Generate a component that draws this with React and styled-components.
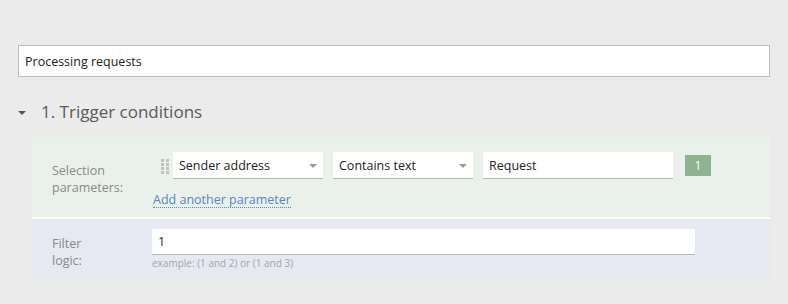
import React from 'react';
import styled, { createGlobalStyle } from 'styled-components';

const GlobalStyle = createGlobalStyle`
  body {
    margin: 0;
    background: #ebebeb;
    font-family: "Segoe UI", "Open Sans", "Noto Sans", sans-serif;
  }
`;

const Page = styled.div`
  padding: 45px 18px 0 18px;
  height: 304px;
  box-sizing: border-box;
`;

const TitleInput = styled.div`
  height: 32px;
  box-sizing: border-box;
  border: 1px solid #bdbdbd;
  background: #fff;
  display: flex;
  align-items: center;
  padding-left: 6px;
  font-size: 12.5px;
  color: #222;
`;

const Heading = styled.div`
  display: flex;
  align-items: center;
  margin-top: 22px;
  height: 24px;
  color: #5a5a5a;
  font-size: 17px;
`;

const Caret = styled.span`
  width: 0;
  height: 0;
  border-left: 4px solid transparent;
  border-right: 4px solid transparent;
  border-top: 4px solid #555;
  margin: 3px 15px 0 0;
`;

const Section = styled.div`
  margin: 14px 0 0 14px;
`;

const Panel = styled.div`
  display: grid;
  grid-template-columns: 120px 1fr;
  background: ${(p) => p.$bg};
  padding: ${(p) => p.$pad};
  border-bottom: ${(p) => (p.$split ? '2px solid #fbfdfb' : 'none')};
`;

const Label = styled.div`
  padding-left: 20px;
  padding-top: ${(p) => p.$top}px;
  font-size: 12.5px;
  line-height: 17px;
  color: #8a8a8a;
`;

const Controls = styled.div`
  display: flex;
  flex-direction: column;
`;

const Row = styled.div`
  display: flex;
  align-items: center;
`;

const Handle = styled.div`
  width: 21px;
  height: 27px;
  display: flex;
  align-items: center;
  justify-content: center;
  padding-left: 4px;
  box-sizing: border-box;
`;

const Field = styled.div`
  position: relative;
  width: ${(p) => p.$w}px;
  height: ${(p) => p.$h || 27}px;
  box-sizing: border-box;
  background: #fff;
  border-bottom: 1px solid #b5b5b5;
  margin-right: 10px;
  display: flex;
  align-items: center;
  padding-left: 6px;
  font-size: 12.5px;
  color: #222;
`;

const DropArrow = styled.span`
  position: absolute;
  right: 6px;
  top: 12px;
  border-left: 4px solid transparent;
  border-right: 4px solid transparent;
  border-top: 4px solid #9a9a9a;
`;

const Badge = styled.div`
  width: 26px;
  height: 21px;
  margin-left: 2px;
  background: #8fb290;
  color: #fff;
  font-size: 12px;
  display: flex;
  align-items: center;
  justify-content: center;
`;

const AddLink = styled.a`
  align-self: flex-start;
  margin: 13px 0 0 1px;
  font-size: 12.5px;
  line-height: 15px;
  color: #5b86c2;
  text-decoration: none;
  border-bottom: 1px dotted #5b86c2;
  cursor: pointer;
`;

const Hint = styled.div`
  margin-top: 1px;
  font-size: 10px;
  color: #a5a5a5;
`;

const DragDots = () => (
  <svg width="8" height="16" viewBox="0 0 8 16">
    {[0, 4, 8, 12].map((y) =>
      [0, 5].map((x) => <rect key={`${x}-${y}`} x={x} y={y + 1} width="3" height="3" fill="#c2c2c2" />)
    )}
  </svg>
);

export default function App() {
  return (
    <>
      <GlobalStyle />
      <Page>
        <TitleInput>Processing requests</TitleInput>
        <Heading>
          <Caret />
          1. Trigger conditions
        </Heading>
        <Section>
          <Panel $bg="#eaf1ea" $pad="15px 0 9px 0" $split>
            <Label $top={10}>
              Selection
              <br />
              parameters:
            </Label>
            <Controls>
              <Row>
                <Handle>
                  <DragDots />
                </Handle>
                <Field $w={150}>
                  Sender address
                  <DropArrow />
                </Field>
                <Field $w={140}>
                  Contains text
                  <DropArrow />
                </Field>
                <Field $w={190}>Request</Field>
                <Badge>1</Badge>
              </Row>
              <AddLink>Add another parameter</AddLink>
            </Controls>
          </Panel>
          <Panel $bg="#e6e9f1" $pad="10px 0 9px 0">
            <Label $top={6}>
              Filter
              <br />
              logic:
            </Label>
            <Controls>
              <Field $w={543} $h={26}>1</Field>
              <Hint>example: (1 and 2) or (1 and 3)</Hint>
            </Controls>
          </Panel>
        </Section>
      </Page>
    </>
  );
}
